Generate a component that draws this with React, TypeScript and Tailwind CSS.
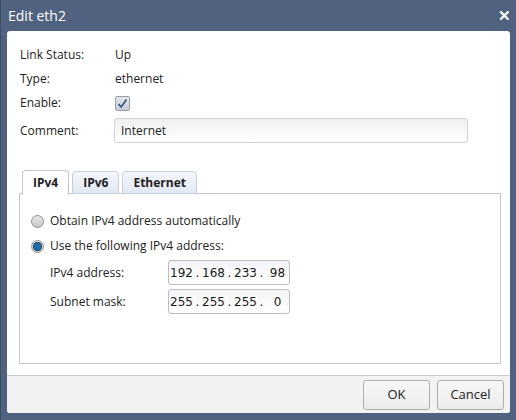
import React from 'react';

const font = { fontFamily: '"Open Sans", "Noto Sans", sans-serif' };

const IpBox: React.FC<{ parts: string[] }> = ({ parts }) => (
  <div className="w-[122px] h-[25px] border border-[#b9bcc9] rounded-[3px] bg-gradient-to-b from-[#f3f4f5] to-white flex items-center pl-[1px] text-[12px] text-[#1a1a1a] font-['DejaVu_Sans',sans-serif]">
    {parts.map((p, i) => (
      <React.Fragment key={i}>
        <span className="w-[23px] text-center">{p}</span>
        {i < 3 && <span className="w-[9px] text-center">.</span>}
      </React.Fragment>
    ))}
  </div>
);

const Radio: React.FC<{ checked?: boolean }> = ({ checked }) => (
  <span className="w-[13px] h-[13px] rounded-full border border-[#8f8f8f] bg-gradient-to-b from-[#e6e6e6] to-[#c9c9c9] flex items-center justify-center">
    {checked && <span className="w-[7px] h-[7px] rounded-full bg-[#1f6fae] ring-1 ring-[#1b3c5c]" />}
  </span>
);

export default function App() {
  return (
    <div style={font} className="w-[516px] h-[420px] bg-[#50627f] border-l border-[#3e4d66] flex flex-col text-[12px] text-[#222]">
      <div className="h-[31px] flex items-center justify-between pl-[7px] pr-[5px] text-white">
        <span className="text-[14px] -mt-[1px]">Edit eth2</span>
        <span className="text-[15px] font-bold leading-none">✕</span>
      </div>
      <div className="flex-1 mx-[6px] mb-[7px] bg-white rounded-[3px] flex flex-col overflow-hidden">
        <div className="flex-1 pt-[12px] pl-[13px] pr-[11px] flex flex-col">
          <div className="h-6 flex items-center">
            <span className="w-[95px]">Link Status:</span>
            <span>Up</span>
          </div>
          <div className="h-6 flex items-center">
            <span className="w-[95px]">Type:</span>
            <span>ethernet</span>
          </div>
          <div className="h-6 flex items-center">
            <span className="w-[95px]">Enable:</span>
            <span className="w-[15px] h-[15px] border border-[#9a9ea8] rounded-[2px] bg-gradient-to-b from-[#e3e6ec] to-[#c8ccd6] flex items-center justify-center">
              <svg width="11" height="11" viewBox="0 0 11 11">
                <path d="M1.5 6 L4.2 9 L9.5 1.5" fill="none" stroke="#3c4f7a" strokeWidth="1.6" />
              </svg>
            </span>
          </div>
          <div className="h-[25px] mt-[3px] flex items-center">
            <span className="w-[94px]">Comment:</span>
            <div className="w-[354px] h-[25px] border border-[#cfd1d2] rounded-[3px] bg-gradient-to-b from-[#eef0f0] to-white flex items-center px-[6px] text-[#222]">
              Internet
            </div>
          </div>

          <div className="mt-[27px] flex items-end pl-[2px] gap-[3px] relative z-10">
            <div className="h-[25px] px-[10px] bg-white border border-[#c6c6c6] border-b-white rounded-t-[4px] flex items-center font-bold -mb-px">IPv4</div>
            <div className="h-[23px] px-[10px] bg-gradient-to-b from-[#f4f7fb] to-[#e1e9f4] border border-[#c6cfdb] rounded-t-[4px] flex items-center font-bold">IPv6</div>
            <div className="h-[23px] px-[10px] bg-gradient-to-b from-[#f4f7fb] to-[#e1e9f4] border border-[#c6cfdb] rounded-t-[4px] flex items-center font-bold">Ethernet</div>
          </div>
          <div className="h-[171px] -mt-px border border-[#c6c6c6] w-[482px] -ml-px pt-[19px] pl-[11px]">
            <div className="h-[16px] flex items-center gap-[6px]">
              <Radio />
              <span>Obtain IPv4 address automatically</span>
            </div>
            <div className="h-[16px] mt-[9px] flex items-center gap-[6px]">
              <Radio checked />
              <span>Use the following IPv4 address:</span>
            </div>
            <div className="mt-[6px] pl-[19px] flex items-center">
              <span className="w-[118px]">IPv4 address:</span>
              <IpBox parts={['192', '168', '233', '98']} />
            </div>
            <div className="mt-[4px] pl-[19px] flex items-center">
              <span className="w-[118px]">Subnet mask:</span>
              <IpBox parts={['255', '255', '255', '0']} />
            </div>
          </div>
        </div>
        <div className="h-[38px] bg-[#f2f2f2] border-t border-[#c8c8c8] flex items-center justify-end gap-[7px] pr-[6px]">
          <button className="w-[67px] h-[30px] border border-[#adadad] rounded-[3px] bg-gradient-to-b from-[#f7f7f7] to-[#ececec] text-[13px]">OK</button>
          <button className="w-[67px] h-[30px] border border-[#adadad] rounded-[3px] bg-gradient-to-b from-[#f7f7f7] to-[#ececec] text-[13px]">Cancel</button>
        </div>
      </div>
    </div>
  );
}
